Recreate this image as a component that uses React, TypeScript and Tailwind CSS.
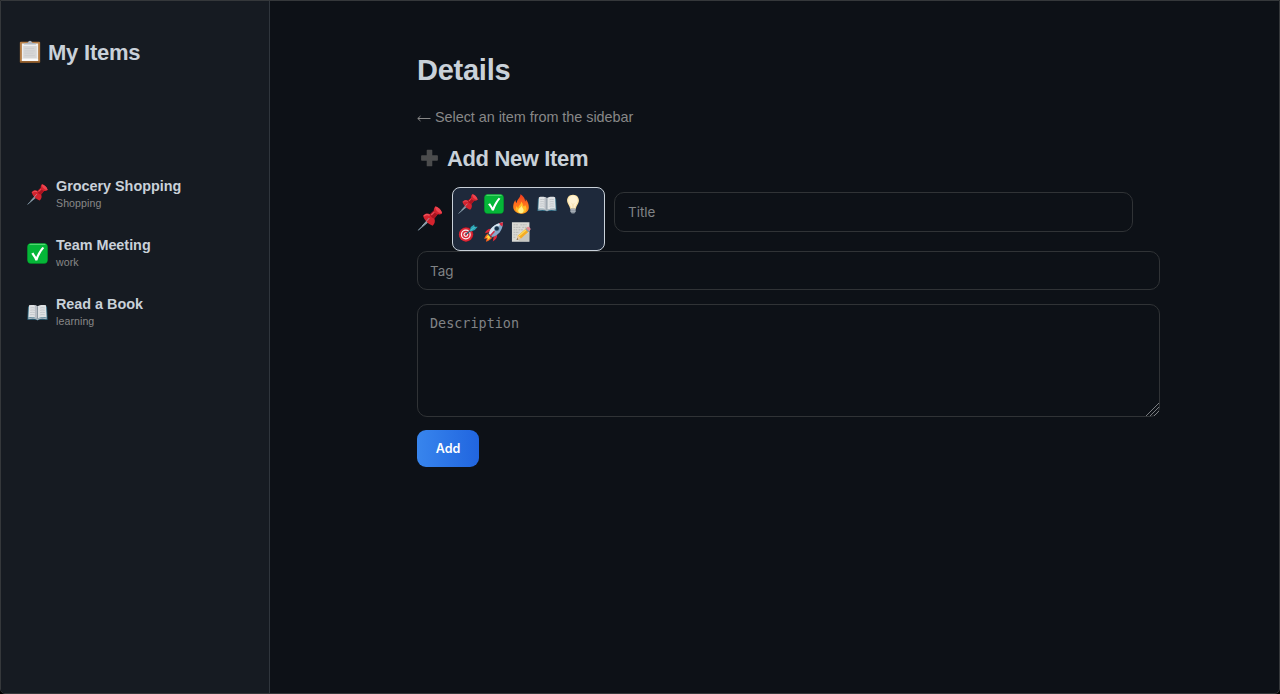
import React from "react";

type IconProps = { className?: string };

function Pin({ className }: IconProps) {
  return (
    <svg viewBox="0 0 32 32" className={className}>
      <path d="M14 17.500 1 31l14.500-12z" fill="#93a8b5" stroke="#8399a6" strokeWidth="1" strokeLinejoin="round" />
      <path d="M7 12.500c3-3.400 6.500-3.300 9-2l5-4.700c-.3-2 .2-3.800 1.800-5.300 3.800.6 7.600 4.300 8.700 8.700-1.600 1.500-3.600 1.800-5.500 1.400l-4.500 5.300c1.400 3 1 6.400-2.100 9.300C14.500 23.700 8.500 18 7 12.500z" fill="#d4232e" />
      <path d="M16 10.500c.5 3 2.600 5 5.500 5.400l4.500-5.300c-2.600-.6-4.500-2.400-5-4.800z" fill="#a81420" />
      <path d="M22.800.5c-1 4 4 9 8.700 8.700C30.500 4.700 26.600 1.100 22.800.500z" fill="#ed444f" />
      <path d="M8.500 12.800c2.200-2 4.600-2.100 7-.8" stroke="#ee5660" strokeWidth="1.500" fill="none" />
      <path d="m17.500 11.500 4.200-4" stroke="#e94c57" strokeWidth="1.600" />
      <path d="m15 15.500-9 10" stroke="#a9b8c1" strokeWidth="1" />
    </svg>
  );
}

function Check({ className }: IconProps) {
  return (
    <svg viewBox="0 0 32 32" className={className}>
      <rect x=".5" y=".5" width="31" height="31" rx="5.500" fill="#019b28" />
      <rect x="1" y="1" width="30" height="29.500" rx="5" fill="#05b638" />
      <path d="M4.500 2h23" stroke="#64df7e" strokeWidth="1.500" strokeLinecap="round" />
      <path d="m6.500 16.500 3.200-1.900 4.300 6.900C16.500 15.700 19.500 10.500 23.500 6l2.700 1.600c-4.500 5.400-7.900 11.300-10.400 18.900h-3.200C11.200 22.600 9 19.500 6.500 16.500z" fill="#fff" />
    </svg>
  );
}

function Book({ className }: IconProps) {
  return (
    <svg viewBox="0 0 32 32" className={className}>
      <path d="M1.500 7H30.500l1 20H18l-2 1-2-1H.5z" fill="#28637c" />
      <path d="M2 25.500c5-1.500 10-1.500 14 1 4-2.500 9-2.500 14-1" stroke="#a9b5be" strokeWidth="2" fill="none" />
      <path d="M3 5c5-1 10-.5 13 1.500C19 4.500 24 4 29 5l1 19c-5-1-10-.8-14 1.500-4-2.300-9-2.500-14-1.500z" fill="#dfe2e4" />
      <path d="M12 5c2 .4 3.200 1 4 1.800V25.500c-1.200-.8-2.600-1.400-4-1.700z" fill="#b9bec5" />
      <path d="M16 6.500v19" stroke="#687984" strokeWidth="1" />
      <path d="M5 9c3-.6 5-.5 7 .2M5 12.500c3-.6 5-.5 7 .2M4.800 16c3-.6 5-.5 7 .2M4.600 19.500c3-.6 5-.5 7 .2M20 9.200c2-.7 4-.8 7-.2M20 12.700c2-.7 4-.8 7-.2M20 16.200c2-.7 4-.8 7-.2M20 19.700c2-.7 4-.8 7-.2" stroke="#afb4ba" strokeWidth=".9" fill="none" />
    </svg>
  );
}

function Fire({ className }: IconProps) {
  return (
    <svg viewBox="0 0 32 32" className={className}>
      <defs>
        <linearGradient id="flame" x1="0" y1="0" x2="0" y2="1">
          <stop stopColor="#ef3820" />
          <stop offset=".55" stopColor="#ff741c" />
          <stop offset="1" stopColor="#ff981b" />
        </linearGradient>
      </defs>
      <path d="M15 .5c6 3.500 7.500 8 7.500 11.500 1-1 1.300-2.300 1-4 3.500 4.200 5 8.700 5 13 0 6.500-5 10.500-12 10.500S3.500 27.200 3.500 20.500C3.500 16 5 12.500 7 9.500c.3 2.600 1.200 4 2.500 5C8.500 9.500 15.500 6.500 15 .5z" fill="url(#flame)" />
      <path d="M16 12c4.500 4 2 7 5 8 1-1 1.300-2 1.200-3 2.500 3.500 3.300 6 2.200 9-1.300 3.200-4.400 4.700-8.400 4.700s-7.400-1.800-8.200-5c-.6-2.400.2-4.700 1.200-6.500.5 2 1.500 3 3 3.300C11 19 17 16.500 16 12z" fill="#ffbd27" />
      <path d="M17 18.500c-.2 3 3.500 5 3.300 8-.2 2.600-1.800 4.200-4.300 4.200s-4.600-1.500-4.500-4.200c.1-3 4.500-4.500 5.500-8z" fill="#fff08a" />
    </svg>
  );
}

function Bulb({ className }: IconProps) {
  return (
    <svg viewBox="0 0 32 32" className={className}>
      <path d="M16 1C9.500 1 6.500 5.500 6.500 10.500c0 5 4 7.500 5 13.500h9c1-6 5-8.500 5-13.500C25.500 5.500 22.500 1 16 1z" fill="#fbe1a4" />
      <path d="M16 2.500c-4.800 0-7.500 3.500-7.500 7.500 0 5 3.700 7 4.700 13h5.600c1-6 4.700-8 4.700-13 0-4-2.500-7.500-7.500-7.500z" fill="#fff3d5" />
      <path d="m13 14 2 2v7m4-9-2 2v7" stroke="#f1d49d" strokeWidth=".8" fill="none" />
      <path d="M11.700 23h8.600v5.500L18 31h-4l-2.300-2.500z" fill="#87909a" />
      <path d="M12 25h8M12 27.500h8" stroke="#cbd1d7" strokeWidth="1" />
    </svg>
  );
}

function Dart({ className }: IconProps) {
  return (
    <svg viewBox="0 0 32 32" className={className}>
      <circle cx="13" cy="20" r="11.500" fill="#b90e1e" />
      <circle cx="12.500" cy="20" r="11" fill="#db2b39" />
      <circle cx="12.500" cy="20" r="7.900" fill="#f7f3f3" />
      <circle cx="12.500" cy="20" r="6" fill="#dd2735" />
      <circle cx="12.500" cy="20" r="3.800" fill="#f7f3f3" />
      <circle cx="12.500" cy="20" r="1.900" fill="#d7202f" />
      <path d="m12.500 20 10-8.500" stroke="#295f74" strokeWidth="2" />
      <path d="m19 13 1.500-5L26 4l.3 3.500 5.200.2-4.500 5-6.500 2.300z" fill="#2ba6b7" />
      <path d="m20 13.500 7-5.500" stroke="#5fcbd3" strokeWidth="1.300" />
    </svg>
  );
}

function Rocket({ className }: IconProps) {
  return (
    <svg viewBox="0 0 32 32" className={className}>
      <path d="M7 18C3.500 19.500 1 24 .5 27l4-1L3 31.500c5-1.500 9-4 11-8z" fill="#fb631b" />
      <path d="M8 20c-2.500 1.500-4 3.500-4.700 5.500l3-.8-.8 4c3-1.500 5-3.500 6-6z" fill="#ffda3c" />
      <path d="M12 11c-5-.5-8.500 2-10.500 7l7-1.500zM21 20c.5 5-2 8.500-7 11l1.500-7.500z" fill="#df2638" />
      <path d="M8 19c1-8 8-16 22.500-18.500C30 14 22 22.500 13 24z" fill="#86aaca" />
      <path d="M8 19c1-8 8-16 22.500-18.500-5 4-13 12-20 20.500z" fill="#d5e3ee" />
      <path d="M24 2.300C26 1.500 28 .9 30.500.5c0 2.400-.4 4.700-1.200 6.700C27.500 6 25.500 4.200 24 2.300z" fill="#d7293e" />
      <circle cx="20.500" cy="10.500" r="4.200" fill="#62829a" />
      <circle cx="20.500" cy="10.500" r="3.200" fill="#142e48" />
      <path d="m7.500 18.500 5.500 5.500-1.500 1.500-5.500-5.500z" fill="#3a526a" />
      <path d="m10.500 21.500 5.500-6" stroke="#d52a3f" strokeWidth="2.500" strokeLinecap="round" />
    </svg>
  );
}

function Memo({ className }: IconProps) {
  return (
    <svg viewBox="0 0 32 32" className={className}>
      <path d="M1.500.5h28v31h-28z" fill="#d9d9d4" />
      <path d="M4 4.500h8M15 4.500h10M4 8.500h12M18 8.500h8M4 12.500h6M12 12.500h8M4 16.500h9M4 20.500h6M4 24.500h4" stroke="#a9a9a8" strokeWidth="1.100" strokeDasharray="3 1" />
      <path d="M11.500 28.500 30 16l-1 14-15 1z" fill="#aaa9a3" opacity=".4" />
      <path d="m9 28.500 2.300-7L26 8.500l4.500 5L16 26.500z" fill="#f4ac25" />
      <path d="m12.500 22.500 15-13" stroke="#ffda56" strokeWidth="2" />
      <path d="m9 28.500 2.300-7L16 26.500z" fill="#edc99c" />
      <path d="m9 28.500.9-2.700 1.700 1.800z" fill="#333" />
      <path d="m24 10.300 2.500-2.300c1.800-1.500 6 2.700 4.500 4.500l-2.500 2.700z" fill="#e58692" />
      <path d="m22.800 11.300 1.600-1.400 4.800 4.900-1.700 1.500z" fill="#8ca2ad" />
    </svg>
  );
}

function Clipboard({ className }: IconProps) {
  return (
    <svg viewBox="0 0 32 34" className={className}>
      <rect x="1" y="2.500" width="30" height="31" rx="1.500" fill="#b67e46" />
      <path d="M1 32.500h30" stroke="#754519" strokeWidth="1.800" />
      <path d="M4 5h24v26H4z" fill="#eeeeee" />
      <path d="M6 9h20v18H6z" fill="#d6d6d6" />
      <path d="M8 12.500h14M8 16h15M8 19.500h13M8 23h15" stroke="#cbcbcc" strokeWidth="1.200" />
      <path d="M4 29.500h24" stroke="#fff" strokeWidth="2" />
      <path d="M7 6.500c0-2 3-2.300 6-2.500.5-4 5.500-4 6 0 3 .2 6 .5 6 2.500z" fill="#aeb5bf" />
    </svg>
  );
}

function Plus({ className }: IconProps) {
  return (
    <svg viewBox="0 0 20 20" className={className}>
      <path d="M7.700 1.500h4.600v6.200h6.200v4.600h-6.200v6.200H7.700v-6.200H1.500V7.700h6.200z" fill="#4b4c4d" stroke="#4b4c4d" strokeWidth="1.600" strokeLinejoin="round" />
    </svg>
  );
}

const items = [
  { title: "Grocery Shopping", tag: "Shopping", Icon: Pin },
  { title: "Team Meeting", tag: "work", Icon: Check },
  { title: "Read a Book", tag: "learning", Icon: Book },
];

const choices = [Pin, Check, Fire, Book, Bulb, Dart, Rocket, Memo];

export default function App() {
  return (
    <div className="h-[694px] overflow-hidden bg-black">
      <div className="flex h-full overflow-hidden rounded-b-[5px] border border-[#35383b] bg-[#0d1117] font-['Liberation_Sans',sans-serif] text-[#c9d1d9]">
        <aside className="w-[269px] shrink-0 border-r border-[#30363d] bg-[#161b22] pt-[37px]">
          <h1 className="flex h-[30px] items-center pl-[18px] text-[22px] font-bold leading-[30px] tracking-[-0.22px]">
            <Clipboard className="mb-[3px] mr-[7px] h-[23px] w-[22px] shrink-0" />
            My Items
          </h1>
          <ul className="flex flex-col pt-[97px]">
            {items.map(({ title, tag, Icon }) => (
              <li key={title} className="flex h-[59px] items-center pl-[26px]">
                <Icon className="h-[21px] w-[21px] shrink-0" />
                <div className="ml-2 pb-px">
                  <div className="text-[14.4px] font-bold leading-[18px] tracking-[-0.02px]">{title}</div>
                  <div className="text-[10.6px] leading-4 tracking-[0.08px] text-[#888]">{tag}</div>
                </div>
              </li>
            ))}
          </ul>
        </aside>
        <main className="flex-1 pl-[147px] pt-[51px]">
          <h2 className="text-[29px] font-bold leading-9 tracking-[-0.25px]">Details</h2>
          <p className="mt-[19px] flex h-5 items-center text-[14.4px] leading-5 tracking-[-0.03px] text-[#888]">
            <svg viewBox="0 0 14 8" className="mr-1 mt-[3px] h-2 w-[14px]" fill="none" stroke="currentColor">
              <path d="M13.500 3.500H.8M3.500 1 .8 3.500 3.500 6" />
            </svg>
            Select an item from the sidebar
          </p>
          <h3 className="mt-[18px] flex h-[28px] items-center text-[22px] font-bold leading-7 tracking-[-0.36px]">
            <Plus className="mb-[3px] ml-[3px] mr-2 h-[18px] w-[19px]" />
            Add New Item
          </h3>
          <form className="mt-[14px] w-[743px]" onSubmit={(e) => e.preventDefault()}>
            <div className="flex h-16">
              <Pin className="mt-[19px] h-[25px] w-[26px] shrink-0" />
              <div className="ml-[9px] grid h-16 w-[153px] grid-cols-[repeat(5,26.300px)] grid-rows-[28px_28px] rounded-[8px] border border-[#c9d1d9] bg-[#1e293b] pl-[2px] pt-[2px]">
                {choices.map((Icon, i) => (
                  <button key={i} type="button" className="flex items-center justify-center">
                    <Icon className="h-5 w-5" />
                  </button>
                ))}
              </div>
              <input
                placeholder="Title"
                className="ml-[9px] mt-[5px] h-10 w-[519px] rounded-[10px] border border-[#303336] bg-transparent px-[13px] font-['Inter',sans-serif] text-[13.400px] outline-none placeholder:text-[#808386]"
              />
            </div>
            <input
              placeholder="Tag"
              className="block h-[39px] w-full rounded-[10px] border border-[#303336] bg-transparent px-3 pt-px font-['Inter',sans-serif] text-[13.400px] outline-none placeholder:text-[#808386]"
            />
            <div className="relative mt-[14px] h-[113px]">
              <textarea
                placeholder="Description"
                className="block h-full w-full resize-none rounded-[10px] border border-[#303336] bg-transparent px-3 py-[10px] font-['DejaVu_Sans_Mono',monospace] text-[13.440px] leading-[17px] outline-none placeholder:text-[#808386]"
              />
              <svg viewBox="0 0 13 13" className="pointer-events-none absolute bottom-px right-px h-[13px] w-[13px]" fill="none" stroke="#85888b" strokeWidth=".9">
                <path d="M0 13 13 0M4 13l9-9M8 13l5-5" />
              </svg>
            </div>
            <button className="mt-[13px] h-[37px] w-[62px] rounded-[9px] bg-linear-to-r from-[#3885ed] to-[#2165df] pt-[2px] font-['Inter',sans-serif] text-[12.500px] font-semibold text-white">
              Add
            </button>
          </form>
        </main>
      </div>
    </div>
  );
}
